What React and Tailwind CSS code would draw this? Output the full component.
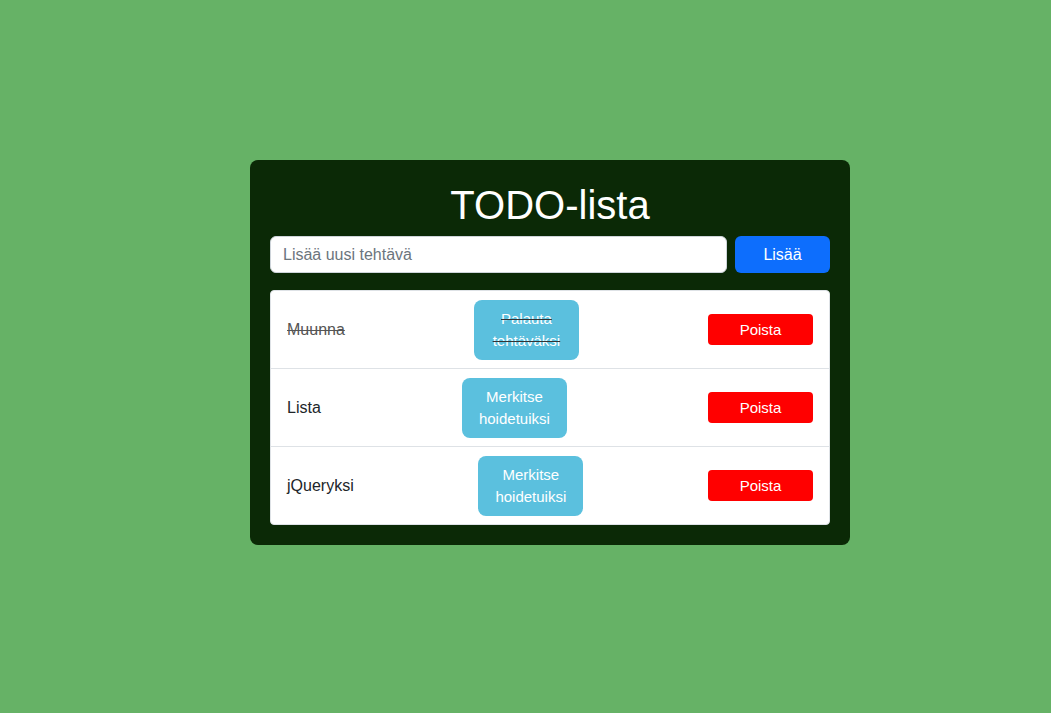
const TODOS = [
  { id: 1, text: 'Muunna', done: true },
  { id: 2, text: 'Lista', done: false },
  { id: 3, text: 'jQueryksi', done: false },
]

function TodoRow({ todo, last }) {
  return (
    <li
      className={`flex items-center justify-between px-4 ${last ? 'h-[77px]' : 'h-[78px] border-b border-[#dee2e6]'}`}
    >
      <span className={todo.done ? 'text-[#555] line-through' : 'text-[#212529]'}>{todo.text}</span>
      <button
        className={`w-[105px] rounded-lg bg-[#5bc0de] px-2 py-2 text-center text-[15px] leading-[22px] text-white ${todo.done ? 'line-through decoration-[#333]' : ''}`}
      >
        {todo.done ? 'Palauta tehtäväksi' : 'Merkitse hoidetuiksi'}
      </button>
      <button className="h-[31px] w-[105px] rounded bg-[#ff0000] pt-px text-[15px] text-white">
        Poista
      </button>
    </li>
  )
}

export default function App() {
  return (
    <div className="min-h-[713px] bg-[#66b266] pl-[250px] pt-[160px] font-['Liberation_Sans',Arial,sans-serif] text-base">
      <div className="w-[600px] rounded-lg bg-[#0b2906] px-5 pb-5 pt-[21px]">
        <h1 className="mb-[7px] text-center text-[40px] leading-[48px] text-white">TODO-lista</h1>
        <div className="flex gap-2">
          <input
            className="h-[37px] flex-1 rounded-md border border-[#ced4da] bg-white px-3 text-[#212529] placeholder:text-[#6c757d] outline-none"
            placeholder="Lisää uusi tehtävä"
          />
          <button className="h-[37px] w-[95px] rounded-md bg-[#0d6efd] text-white">Lisää</button>
        </div>
        <ul className="mt-[17px] rounded border border-[#dee2e6] bg-white">
          {TODOS.map((t, i) => (
            <TodoRow key={t.id} todo={t} last={i === TODOS.length - 1} />
          ))}
        </ul>
      </div>
    </div>
  )
}
